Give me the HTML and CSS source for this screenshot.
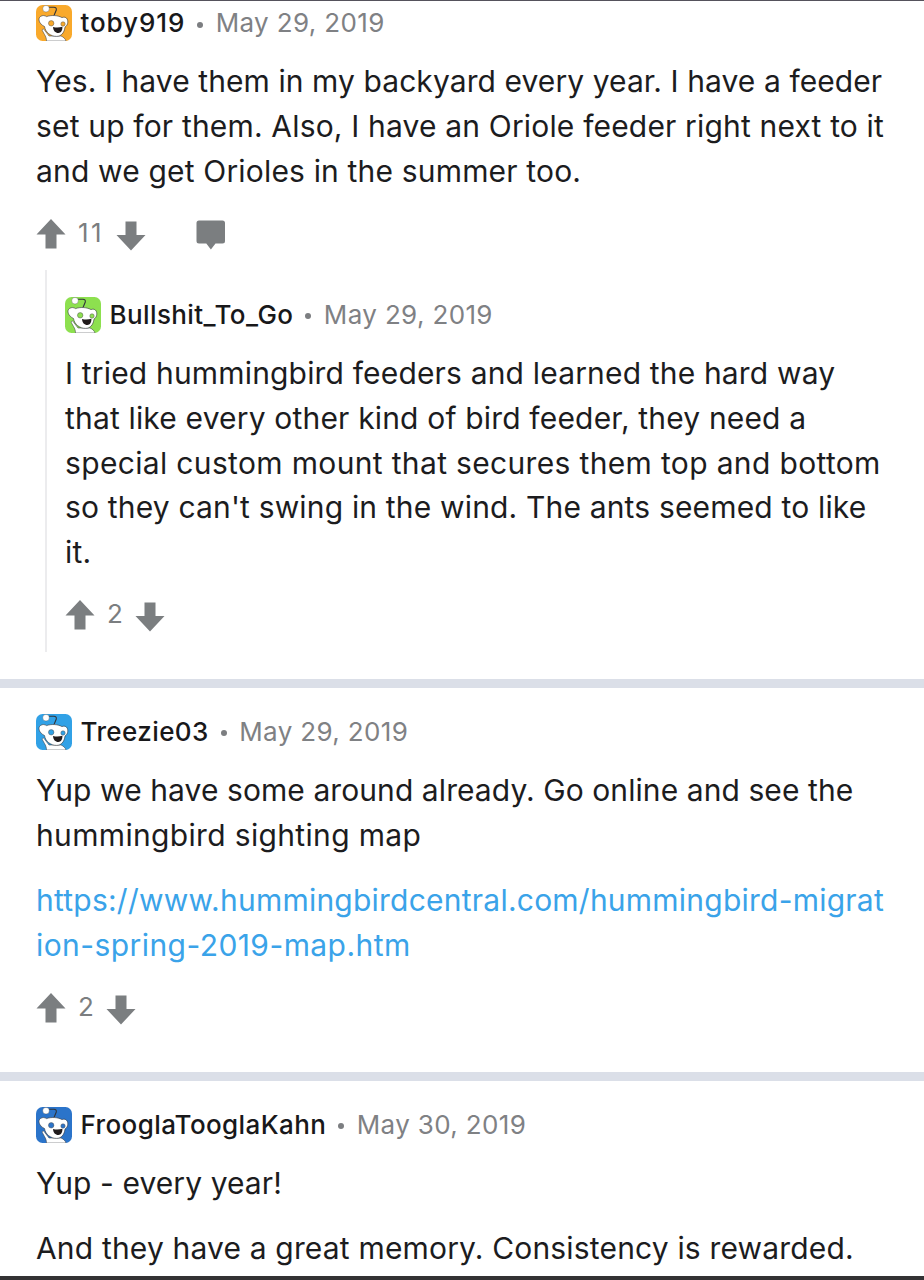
FILE: index.html
```html
<!DOCTYPE html>
<html lang="en">
<head>
    <meta charset="UTF-8">
    <meta name="viewport" content="width=device-width, initial-scale=1.0">
    <title>Comments</title>
    <link rel="stylesheet" href="styles.css">
</head>
<body>
<svg class="sprite" aria-hidden="true">
    <symbol id="snoo" viewBox="0 0 36 36">
        <rect width="36" height="36" rx="6.5" fill="currentColor"/>
        <g stroke="#30343a" stroke-linejoin="round">
            <path d="M17.800 11 20.300 5c.4-2-.8-2.800-2.300-2.800L13 2.300" fill="none" stroke-width="1.100"/>
            <path d="M10.500 36c0-2.500-.7-4.500-2-6.500L6 25c.8-1.500 2.200-1 3 .8L13 31h12c2.500 1 4.500 3 5 5z" fill="#fff" stroke-width=".5"/>
            <path d="M8.500 21.500C3 19 1.500 13.500 4.500 11.500c2-1.500 4.500-1 6 .1 4.500-1.600 11-1.500 15.500 1 3.500-1.500 6 1 5.800 4.500-.1 2.500-1.300 4-2.800 5-.8 6-3.900 9.300-8.500 9.300-5.700 0-11-3.900-12-9.900z" fill="#fff" stroke-width=".6"/>
            <circle cx="10" cy="3.700" r="3.300" fill="#fff" stroke-width=".3"/>
        </g>
        <circle cx="15.200" cy="18.300" r="2.700" fill="currentColor" stroke="#555" stroke-width=".5"/>
        <circle cx="27" cy="19" r="2.200" fill="currentColor" stroke="#555" stroke-width=".5"/>
        <path d="M17 22c3.200.9 6.500.7 9.400-.2.200 3.700-1.400 6.200-4 6.200-3 0-5.200-2.200-5.400-6z" fill="#211b1c"/>
    </symbol>
    <symbol id="up" viewBox="0 0 30 30">
        <path d="M15 0 29.500 15.500H20.500V29.500H9.500V15.500H.5z" fill="currentColor"/>
    </symbol>
    <symbol id="down" viewBox="0 0 30 30">
        <path d="M15 29.500 .5 14H9.500V.5H20.500V14H29.500z" fill="currentColor"/>
    </symbol>
    <symbol id="reply" viewBox="0 0 30 30">
        <path d="M3 .5h23.500a2.500 2.500 0 0 1 2.500 2.500v18a2.500 2.500 0 0 1-2.500 2.500h-7l-4.600 6-4.600-6H3a2.500 2.500 0 0 1-2.500-2.500v-18a2.500 2.500 0 0 1 2.500-2.500z" fill="currentColor"/>
    </symbol>
</svg>

<main>
    <article class="thread">
        <header class="meta">
            <svg class="avatar orange"><use href="#snoo"/></svg>
            <b class="author wide">toby919</b><i class="dot"></i><time>May 29, 2019</time>
        </header>
        <p><span class="tight">Yes. I have them in my backyard every year. I have a feeder</span><br>set up for them. Also, I have an Oriole feeder right next to it<br>and we get Orioles in the summer too.</p>
        <div class="votes">
            <svg class="up"><use href="#up"/></svg>
            <span class="wide">11</span>
            <svg class="down"><use href="#down"/></svg>
            <svg class="reply"><use href="#reply"/></svg>
        </div>

        <section class="nested">
            <header class="meta">
                <svg class="avatar green"><use href="#snoo"/></svg>
                <b class="author">Bullshit_To_Go</b><i class="dot"></i><time>May 29, 2019</time>
            </header>
            <p>I tried hummingbird feeders and learned the hard way<br>that like every other kind of bird feeder, they need a<br><span class="loose">special custom mount that secures them top and bottom</span><br>so they can't swing in the wind. The ants seemed to like<br>it.</p>
            <div class="votes">
                <svg class="up"><use href="#up"/></svg>
                <span>2</span>
                <svg class="down"><use href="#down"/></svg>
            </div>
        </section>
    </article>

    <article class="thread">
        <header class="meta">
            <svg class="avatar sky"><use href="#snoo"/></svg>
            <b class="author">Treezie03</b><i class="dot"></i><time>May 29, 2019</time>
        </header>
        <p><span class="tight">Yup we have some around already. Go online and see the</span><br><span class="loose">hummingbird sighting map</span></p>
        <p><a>https://www.hummingbirdcentral.com/hummingbird-migrat<br><span class="loose">ion-spring-2019-map.htm</span></a></p>
        <div class="votes">
            <svg class="up"><use href="#up"/></svg>
            <span>2</span>
            <svg class="down"><use href="#down"/></svg>
        </div>
    </article>

    <article class="thread">
        <header class="meta">
            <svg class="avatar blue"><use href="#snoo"/></svg>
            <b class="author">FrooglaTooglaKahn</b><i class="dot"></i><time>May 30, 2019</time>
        </header>
        <p><span class="tight">Yup - every year!</span></p>
        <p>And they have a great memory. Consistency is rewarded.</p>
    </article>
</main>
</body>
</html>
```
FILE: styles.css
```css
* {
    box-sizing: border-box;
}
body {
    margin: 0;
    background: #fff;
    color: #1c1c1e;
    font-family: Inter, "Liberation Sans", sans-serif;
}
.sprite {
    display: none;
}
main {
    height: 1280px;
    overflow: hidden;
    border-top: 1px solid #55525c;
    border-bottom: 4px solid #333234;
}
.thread {
    padding: 26px 36px 28px;
}
.thread:first-child {
    padding-top: 4px;
}
.thread + .thread {
    border-top: 9px solid #dbdfe8;
}
.meta {
    display: flex;
    align-items: center;
    height: 36px;
    margin-bottom: 18.4px;
    font-size: 26px;
    line-height: 34px;
    white-space: nowrap;
}
.avatar {
    width: 36px;
    height: 36px;
    margin-right: 8.5px;
}
.orange {
    color: #f9a92b;
}
.green {
    color: #8de04f;
}
.sky {
    color: #31a1e6;
}
.blue {
    color: #2b74ca;
}
.author {
    font-weight: 500;
    letter-spacing: .4px;
    color: #18181a;
}
.author.wide {
    letter-spacing: .9px;
}
.dot {
    width: 6px;
    height: 6px;
    margin: 3px 12.5px 0 12px;
    border-radius: 50%;
    background: #7c7e81;
}
time {
    letter-spacing: .36px;
    color: #7f8184;
}
p {
    margin: 0 0 20.3px;
    font-size: 30px;
    line-height: 44.7px;
    letter-spacing: .17px;
    white-space: nowrap;
}
.tight {
    letter-spacing: .08px;
}
.loose {
    letter-spacing: .34px;
}
a {
    color: #3aa3e9;
    letter-spacing: .23px;
}
a .loose {
    letter-spacing: .43px;
}
.votes {
    display: flex;
    height: 56px;
    padding-top: 5.3px;
    color: #7b7e80;
    font-size: 26px;
    line-height: 30px;
}
.votes svg {
    flex: none;
    width: 30px;
    height: 30px;
}
.votes span {
    margin: -1px 12px 0;
}
.votes .wide {
    letter-spacing: 2.5px;
}
.votes .down {
    margin-top: 2px;
}
.votes .reply {
    margin: 1px 0 0 50px;
}
.nested {
    height: 382px;
    margin: 0 0 -1px 9px;
    padding: 27px 0 0 18px;
    border-left: 2px solid #ececee;
}
```
